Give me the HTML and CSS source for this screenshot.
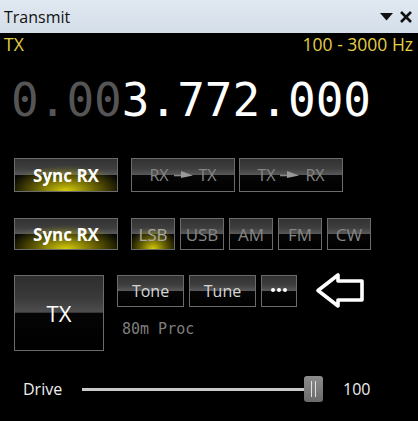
FILE: index.html
```html
<!DOCTYPE html>
<html lang="en">
<head>
    <meta charset="UTF-8">
    <title>Transmit</title>
    <link rel="stylesheet" href="styles.css">
</head>
<body>
<!-- Panel title bar -->
<div class="titlebar">
    <span class="title">Transmit</span>
    <div class="title-icons">
        <svg width="13" height="8" viewBox="0 0 13 8"><polygon points="0,0 13,0 6.5,7.5" fill="#111"/></svg>
        <svg width="14" height="12" viewBox="0 0 14 12"><path d="M2 1 L12 11 M12 1 L2 11" stroke="#111" stroke-width="2.6"/></svg>
    </div>
</div>

<!-- Status line -->
<div class="status">
    <span>TX</span>
    <span>100 - 3000 Hz</span>
</div>

<!-- Frequency readout -->
<div class="freq"><span class="dim">0.00</span>3.772.000</div>

<!-- Sync / copy buttons -->
<div class="row row1">
    <div class="btn wide on">Sync RX</div>
    <div class="pair">
        <div class="btn wide off">RX <svg class="arr" width="22" height="10" viewBox="0 0 22 10"><path d="M1 5.5 H12" stroke="#888" stroke-width="1.6"/><polygon points="8,1 20,5.5 8,8" fill="#999"/></svg> TX</div>
        <div class="btn wide off">TX <svg class="arr" width="22" height="10" viewBox="0 0 22 10"><path d="M1 5.5 H12" stroke="#888" stroke-width="1.6"/><polygon points="8,1 20,5.5 8,8" fill="#999"/></svg> RX</div>
    </div>
</div>

<!-- Mode buttons -->
<div class="row row2">
    <div class="btn wide on">Sync RX</div>
    <div class="modes">
        <div class="btn mode lit">LSB</div>
        <div class="btn mode off">USB</div>
        <div class="btn mode off">AM</div>
        <div class="btn mode off">FM</div>
        <div class="btn mode off">CW</div>
    </div>
</div>

<!-- TX and tools -->
<div class="row row3">
    <div class="btn tx">TX</div>
    <div class="tools">
        <div class="tool-row">
            <div class="btn tool">Tone</div>
            <div class="btn tool">Tune</div>
            <div class="btn more"><i></i><i></i><i></i></div>
            <svg class="pointer" width="50" height="37" viewBox="0 0 50 37">
                <polygon points="3,18.5 23,3 23,9 47,9 47,28 23,28 23,34" fill="none" stroke="#fff" stroke-width="3.6" stroke-linejoin="round"/>
            </svg>
        </div>
        <div class="profile">80m Proc</div>
    </div>
</div>

<!-- Drive slider -->
<div class="drive">
    <span class="drive-label">Drive</span>
    <div class="slider">
        <div class="track"></div>
        <div class="thumb"><i></i><i></i></div>
    </div>
    <span class="drive-value">100</span>
</div>
</body>
</html>
```

FILE: styles.css
```css
/* Dark panel */
body {
    margin: 0;
    background: #000;
    color: #fff;
    font-family: 'Open Sans', 'Noto Sans', sans-serif;
}

/* Title bar */
.titlebar {
    height: 33px;
    background: linear-gradient(#e0e8f1, #d4dee9);
    display: flex;
    align-items: center;
    justify-content: space-between;
    padding: 0 5px 0 4px;
    box-sizing: border-box;
}
.title {
    font-size: 16px;
    color: #111;
}
.title-icons {
    display: flex;
    align-items: center;
    gap: 6px;
}

/* TX / bandwidth line */
.status {
    height: 22px;
    display: flex;
    justify-content: space-between;
    align-items: center;
    padding: 0 5px 0 4px;
    font-size: 17.5px;
    color: #e4cf48;
}

/* Big frequency */
.freq {
    margin-top: 22px;
    padding-left: 11px;
    height: 46px;
    line-height: 46px;
    font-family: 'DejaVu Sans Mono', monospace;
    font-size: 46px;
    color: #fff;
}
.freq .dim { color: #555; }

/* Rows of buttons */
.row {
    display: flex;
    padding-left: 14px;
}
.row1 { margin-top: 35px; gap: 13px; }
.row2 { margin-top: 26px; gap: 13px; }
.row3 { margin-top: 25px; gap: 13px; }

.pair, .modes { display: flex; gap: 4px; }
.modes { gap: 5px; }

/* Glossy button */
.btn {
    box-sizing: border-box;
    border: 1px solid #6b6b6b;
    background: linear-gradient(#323232 0%, #3e3e3e 30%, #585858 49%, #070707 50%, #000 100%);
    display: flex;
    align-items: center;
    justify-content: center;
    font-size: 16px;
    color: #d6d6d6;
}
.btn.wide { width: 104px; height: 34px; }
.row2 .btn.wide { height: 32px; }
.btn.mode { width: 44px; height: 32px; font-size: 17px; }
.btn.off { color: #858585; }
.btn.on {
    font-size: 17px;
    font-weight: bold;
    color: #fff;
    background:
        radial-gradient(ellipse 58% 80% at 50% 100%, rgba(215, 205, 10, 1) 0%, rgba(160, 150, 5, 0.65) 50%, rgba(0, 0, 0, 0) 100%),
        linear-gradient(#323232 0%, #3e3e3e 30%, #585858 49%, #070707 50%, #000 100%);
}
.btn.lit {
    color: #a8a8a8;
    background:
        radial-gradient(ellipse 62% 72% at 50% 100%, rgba(215, 205, 10, 1) 0%, rgba(160, 150, 5, 0.6) 50%, rgba(0, 0, 0, 0) 100%),
        linear-gradient(#323232 0%, #3e3e3e 30%, #585858 49%, #070707 50%, #000 100%);
}
.arr { margin: 0 4px; }

.btn.tx {
    width: 90px;
    height: 76px;
    font-size: 22px;
    color: #fff;
    background: linear-gradient(#2e2e2e 0%, #3a3a3a 30%, #4e4e4e 49%, #050505 50%, #000 100%);
}

/* Tone / Tune column */
.tools {
    display: flex;
    flex-direction: column;
}
.tool-row {
    display: flex;
    align-items: flex-start;
    gap: 5px;
}
.btn.tool { width: 67px; height: 32px; }
.btn.more {
    width: 36px;
    height: 32px;
    gap: 2px;
    padding-bottom: 2px;
}
.btn.more i {
    width: 4px;
    height: 4px;
    border-radius: 50%;
    background: #fff;
}
.pointer { margin-left: 13px; margin-top: -3px; }
.profile {
    margin-top: 11px;
    padding-left: 5px;
    font-family: 'DejaVu Sans Mono', monospace;
    font-size: 15px;
    color: #7e7e7e;
}

/* Drive slider */
.drive {
    margin-top: 25px;
    height: 26px;
    display: flex;
    align-items: center;
    padding-left: 23px;
    font-size: 16px;
}
.drive-label { width: 59px; color: #eee; }
.slider {
    width: 241px;
    display: flex;
    align-items: center;
}
.track {
    flex: 1;
    height: 3px;
    background: #c9c9c9;
}
.thumb {
    width: 19px;
    height: 26px;
    border-radius: 3px;
    background: linear-gradient(#8c8c8c, #6a6a6a);
    display: flex;
    justify-content: center;
    gap: 3px;
    padding-top: 5px;
    box-sizing: border-box;
}
.thumb i {
    width: 1px;
    height: 16px;
    background: #e0e0e0;
}
.drive-value { margin-left: 20px; color: #eee; }
```
